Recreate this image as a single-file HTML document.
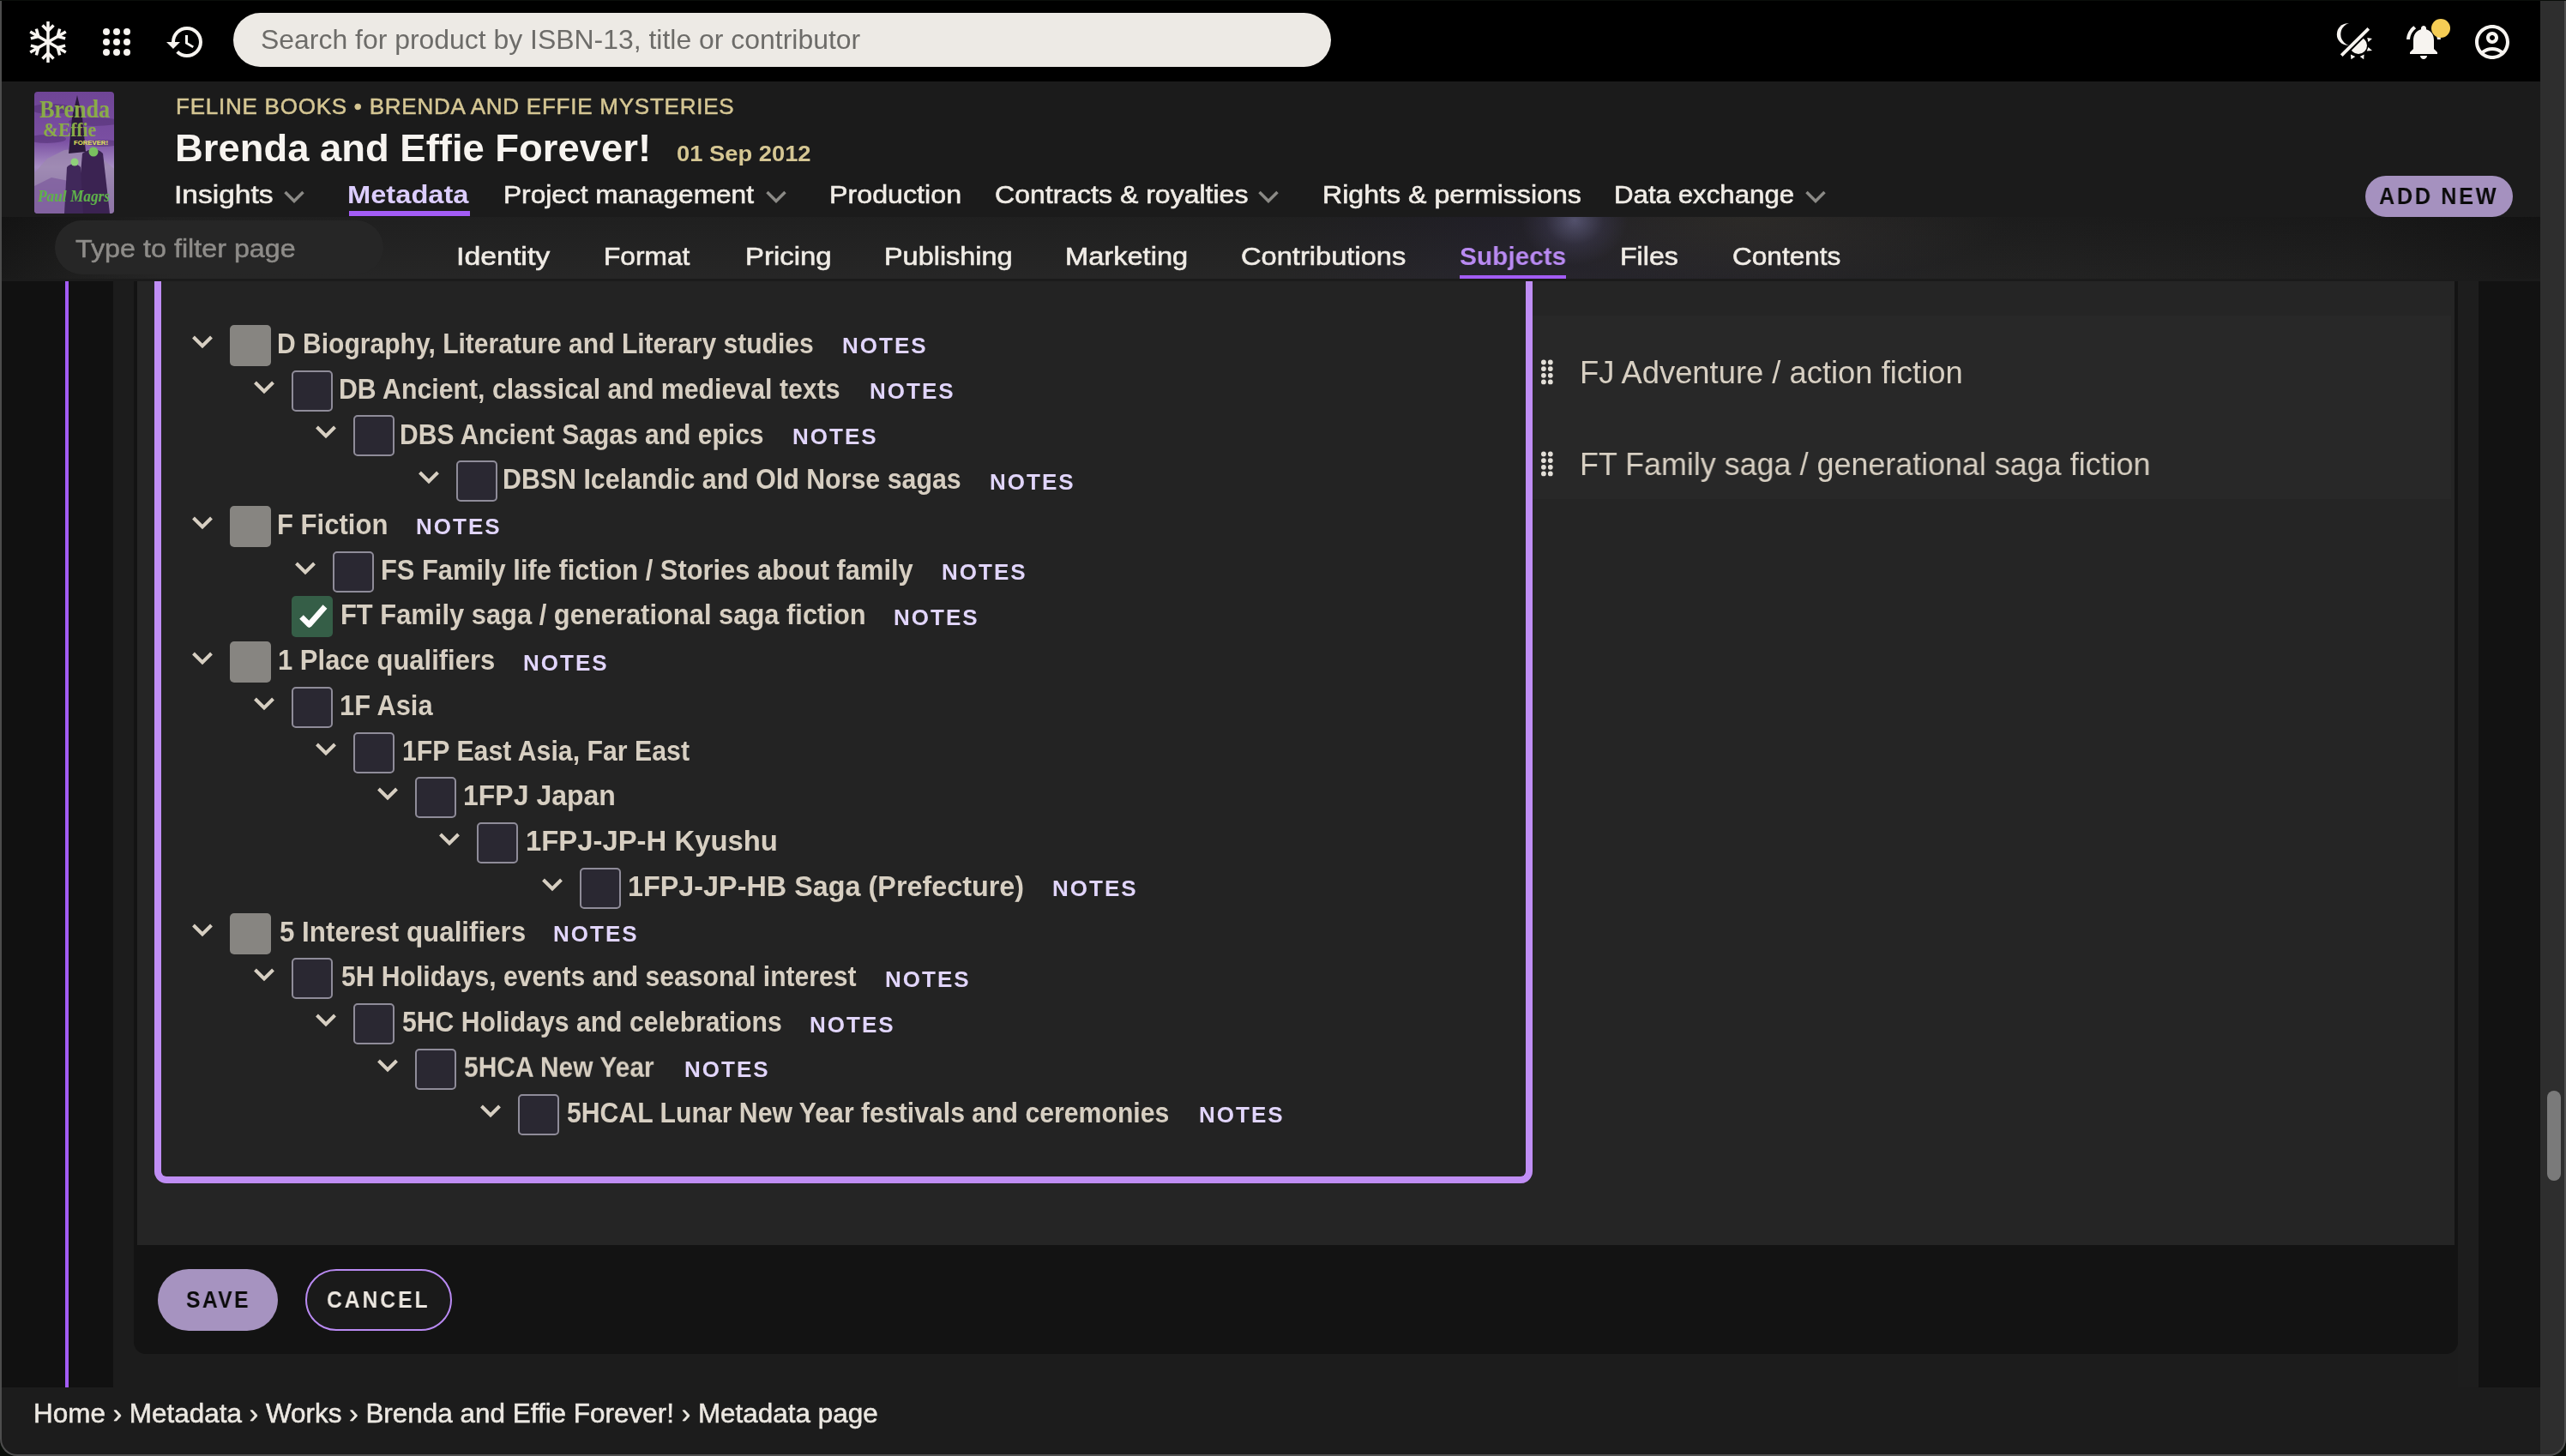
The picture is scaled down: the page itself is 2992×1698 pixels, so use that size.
<!DOCTYPE html>
<html><head><meta charset="utf-8">
<style>
html,body{margin:0;padding:0;width:2992px;height:1698px;overflow:hidden;background:#1c1c1c;}
body{position:relative;font-family:"Liberation Sans",sans-serif;}
.a{position:absolute;}
.t{position:absolute;white-space:pre;line-height:1;font-family:"Liberation Sans",sans-serif;will-change:transform;}
.cbg{position:absolute;width:48px;height:48px;border-radius:5px;background:#878581;}
.cbd{position:absolute;width:44px;height:44px;border-radius:5px;background:#2a2832;border:2px solid #8f8c99;}
.cbc{position:absolute;width:48px;height:48px;border-radius:5px;background:#355e47;}
.cbc svg{position:absolute;left:0;top:0;}
.chev{position:absolute;}
</style></head><body>
<!-- top bar -->
<div class="a" style="left:0;top:0;width:2992px;height:95px;background:#000;"></div>
<div class="a" style="left:0;top:0;width:2992px;height:1px;background:#3d3070;"></div>
<!-- header -->
<div class="a" style="left:0;top:95px;width:2962px;height:158px;background:#1b1b1b;"></div>
<!-- subnav -->
<div class="a" style="left:0;top:253px;width:2962px;height:72px;background:linear-gradient(180deg,rgba(0,0,0,0.08) 0%,rgba(255,250,240,0.02) 100%),radial-gradient(ellipse 62px 52px at 1836px 4px,rgba(98,96,130,0.85),rgba(70,66,100,0.35) 55%,rgba(0,0,0,0) 100%),radial-gradient(ellipse 300px 78px at 2040px 0px,rgba(48,46,43,0.95),rgba(0,0,0,0) 100%),linear-gradient(90deg,#151515 0,#222 200px,#222 1500px,#23212a 1760px,#1f1f1f 2300px,#1b1b1b 2750px,#141414 2962px);"></div>
<div class="a" style="left:0;top:325px;width:2962px;height:3px;background:#1b1b1b;"></div>
<!-- content columns -->
<div class="a" style="left:0;top:328px;width:132px;height:1290px;background:#111;"></div>
<div class="a" style="left:76px;top:328px;width:4px;height:1290px;background:#a35cf5;"></div>
<div class="a" style="left:132px;top:328px;width:24px;height:1290px;background:#1c1c1c;"></div>
<div class="a" style="left:2866px;top:328px;width:24px;height:1290px;background:#1d1d1d;"></div>
<div class="a" style="left:2890px;top:328px;width:72px;height:1290px;background:#121212;"></div>
<!-- container -->
<div class="a" style="left:156px;top:200px;width:2710px;height:1379px;background:#131313;border-radius:0 0 14px 14px;"></div>
<div class="a" style="left:160px;top:200px;width:2702px;height:1252px;background:#252525;"></div>
<div class="a" style="left:1787px;top:368px;width:1071px;height:214px;background:#282828;"></div>
<!-- purple box -->
<div class="a" style="left:180px;top:200px;width:1591px;height:1171.5px;border:8px solid #c08ef5;border-top:0;border-radius:0 0 14px 14px;background:#232323;"></div>
<!-- SHAPES -->
<div class="cbg" style="left:268px;top:378.9px"></div>
<svg class="chev" style="left:224px;top:390.9px" width="24" height="18" viewBox="0 0 24 18"><polyline points="1.5,2 12,12.5 22.5,2" fill="none" stroke="#d7cfc2" stroke-width="4"/></svg>
<div class="cbd" style="left:340px;top:431.6px"></div>
<svg class="chev" style="left:296px;top:443.6px" width="24" height="18" viewBox="0 0 24 18"><polyline points="1.5,2 12,12.5 22.5,2" fill="none" stroke="#d7cfc2" stroke-width="4"/></svg>
<div class="cbd" style="left:412px;top:484.4px"></div>
<svg class="chev" style="left:368px;top:496.4px" width="24" height="18" viewBox="0 0 24 18"><polyline points="1.5,2 12,12.5 22.5,2" fill="none" stroke="#d7cfc2" stroke-width="4"/></svg>
<div class="cbd" style="left:532px;top:537.1px"></div>
<svg class="chev" style="left:488px;top:549.1px" width="24" height="18" viewBox="0 0 24 18"><polyline points="1.5,2 12,12.5 22.5,2" fill="none" stroke="#d7cfc2" stroke-width="4"/></svg>
<div class="cbg" style="left:268px;top:589.9px"></div>
<svg class="chev" style="left:224px;top:601.9px" width="24" height="18" viewBox="0 0 24 18"><polyline points="1.5,2 12,12.5 22.5,2" fill="none" stroke="#d7cfc2" stroke-width="4"/></svg>
<div class="cbd" style="left:388px;top:642.6px"></div>
<svg class="chev" style="left:344px;top:654.6px" width="24" height="18" viewBox="0 0 24 18"><polyline points="1.5,2 12,12.5 22.5,2" fill="none" stroke="#d7cfc2" stroke-width="4"/></svg>
<div class="cbc" style="left:340px;top:695.3px"><svg width="48" height="48" viewBox="0 0 48 48"><polyline points="11.5,24.5 20.5,33.5 39,12.5" fill="none" stroke="#fff" stroke-width="6.5" stroke-linejoin="round"/></svg></div>
<div class="cbg" style="left:268px;top:748.1px"></div>
<svg class="chev" style="left:224px;top:760.1px" width="24" height="18" viewBox="0 0 24 18"><polyline points="1.5,2 12,12.5 22.5,2" fill="none" stroke="#d7cfc2" stroke-width="4"/></svg>
<div class="cbd" style="left:340px;top:800.8px"></div>
<svg class="chev" style="left:296px;top:812.8px" width="24" height="18" viewBox="0 0 24 18"><polyline points="1.5,2 12,12.5 22.5,2" fill="none" stroke="#d7cfc2" stroke-width="4"/></svg>
<div class="cbd" style="left:412px;top:853.6px"></div>
<svg class="chev" style="left:368px;top:865.6px" width="24" height="18" viewBox="0 0 24 18"><polyline points="1.5,2 12,12.5 22.5,2" fill="none" stroke="#d7cfc2" stroke-width="4"/></svg>
<div class="cbd" style="left:484px;top:906.3px"></div>
<svg class="chev" style="left:440px;top:918.3px" width="24" height="18" viewBox="0 0 24 18"><polyline points="1.5,2 12,12.5 22.5,2" fill="none" stroke="#d7cfc2" stroke-width="4"/></svg>
<div class="cbd" style="left:556px;top:959.0px"></div>
<svg class="chev" style="left:512px;top:971.0px" width="24" height="18" viewBox="0 0 24 18"><polyline points="1.5,2 12,12.5 22.5,2" fill="none" stroke="#d7cfc2" stroke-width="4"/></svg>
<div class="cbd" style="left:676px;top:1011.8px"></div>
<svg class="chev" style="left:632px;top:1023.8px" width="24" height="18" viewBox="0 0 24 18"><polyline points="1.5,2 12,12.5 22.5,2" fill="none" stroke="#d7cfc2" stroke-width="4"/></svg>
<div class="cbg" style="left:268px;top:1064.5px"></div>
<svg class="chev" style="left:224px;top:1076.5px" width="24" height="18" viewBox="0 0 24 18"><polyline points="1.5,2 12,12.5 22.5,2" fill="none" stroke="#d7cfc2" stroke-width="4"/></svg>
<div class="cbd" style="left:340px;top:1117.3px"></div>
<svg class="chev" style="left:296px;top:1129.3px" width="24" height="18" viewBox="0 0 24 18"><polyline points="1.5,2 12,12.5 22.5,2" fill="none" stroke="#d7cfc2" stroke-width="4"/></svg>
<div class="cbd" style="left:412px;top:1170.0px"></div>
<svg class="chev" style="left:368px;top:1182.0px" width="24" height="18" viewBox="0 0 24 18"><polyline points="1.5,2 12,12.5 22.5,2" fill="none" stroke="#d7cfc2" stroke-width="4"/></svg>
<div class="cbd" style="left:484px;top:1222.7px"></div>
<svg class="chev" style="left:440px;top:1234.7px" width="24" height="18" viewBox="0 0 24 18"><polyline points="1.5,2 12,12.5 22.5,2" fill="none" stroke="#d7cfc2" stroke-width="4"/></svg>
<div class="cbd" style="left:604px;top:1275.5px"></div>
<svg class="chev" style="left:560px;top:1287.5px" width="24" height="18" viewBox="0 0 24 18"><polyline points="1.5,2 12,12.5 22.5,2" fill="none" stroke="#d7cfc2" stroke-width="4"/></svg>
<!-- drag handles -->
<svg class="a" style="left:1795px;top:418px" width="20" height="32" viewBox="0 0 20 32"><g fill="#e3dfd8"><circle cx="4.9" cy="4.5" r="2.9"/><circle cx="12.8" cy="4.5" r="2.9"/><circle cx="4.9" cy="12.1" r="2.9"/><circle cx="12.8" cy="12.1" r="2.9"/><circle cx="4.9" cy="19.8" r="2.9"/><circle cx="12.8" cy="19.8" r="2.9"/><circle cx="4.9" cy="27.4" r="2.9"/><circle cx="12.8" cy="27.4" r="2.9"/></g></svg>
<svg class="a" style="left:1795px;top:525px" width="20" height="32" viewBox="0 0 20 32"><g fill="#e3dfd8"><circle cx="4.9" cy="4.5" r="2.9"/><circle cx="12.8" cy="4.5" r="2.9"/><circle cx="4.9" cy="12.1" r="2.9"/><circle cx="12.8" cy="12.1" r="2.9"/><circle cx="4.9" cy="19.8" r="2.9"/><circle cx="12.8" cy="19.8" r="2.9"/><circle cx="4.9" cy="27.4" r="2.9"/><circle cx="12.8" cy="27.4" r="2.9"/></g></svg>
<!-- sticky header/subnav on top of container -->
<div class="a" style="left:0;top:95px;width:2962px;height:158px;background:#1b1b1b;"></div>
<div class="a" style="left:0;top:253px;width:2962px;height:72px;background:linear-gradient(180deg,rgba(0,0,0,0.08) 0%,rgba(255,250,240,0.02) 100%),radial-gradient(ellipse 62px 52px at 1836px 4px,rgba(98,96,130,0.85),rgba(70,66,100,0.35) 55%,rgba(0,0,0,0) 100%),radial-gradient(ellipse 300px 78px at 2040px 0px,rgba(48,46,43,0.95),rgba(0,0,0,0) 100%),linear-gradient(90deg,#151515 0,#222 200px,#222 1500px,#23212a 1760px,#1f1f1f 2300px,#1b1b1b 2750px,#141414 2962px);"></div>
<div class="a" style="left:0;top:325px;width:2962px;height:3px;background:#1b1b1b;"></div>
<!-- filter input -->
<div class="a" style="left:64px;top:257px;width:383px;height:63px;border-radius:32px;background:#262626;"></div>
<!-- search -->
<div class="a" style="left:272px;top:15px;width:1280px;height:63px;border-radius:32px;background:#edeae5;"></div>
<!-- underlines -->
<div class="a" style="left:407px;top:246px;width:141px;height:6px;background:#a35cf5;"></div>
<div class="a" style="left:1702px;top:321px;width:124px;height:4px;background:#a35cf5;"></div>
<!-- nav chevrons -->
<svg class="a" style="left:331px;top:222px" width="24" height="16" viewBox="0 0 24 16"><polyline points="1.5,2 12,12.5 22.5,2" fill="none" stroke="#8b8a86" stroke-width="3.5"/></svg>
<svg class="a" style="left:893px;top:222px" width="24" height="16" viewBox="0 0 24 16"><polyline points="1.5,2 12,12.5 22.5,2" fill="none" stroke="#8b8a86" stroke-width="3.5"/></svg>
<svg class="a" style="left:1467px;top:222px" width="24" height="16" viewBox="0 0 24 16"><polyline points="1.5,2 12,12.5 22.5,2" fill="none" stroke="#8b8a86" stroke-width="3.5"/></svg>
<svg class="a" style="left:2105px;top:222px" width="24" height="16" viewBox="0 0 24 16"><polyline points="1.5,2 12,12.5 22.5,2" fill="none" stroke="#8b8a86" stroke-width="3.5"/></svg>
<!-- ADD NEW -->
<div class="a" style="left:2758px;top:205px;width:172px;height:48px;border-radius:24px;background:#a591bf;"></div>
<!-- book cover -->
<svg class="a" style="left:40px;top:107px" width="93" height="142" viewBox="0 0 93 142">
<defs><linearGradient id="bg" x1="0" y1="0" x2="0" y2="1"><stop offset="0" stop-color="#6f4596"/><stop offset="0.4" stop-color="#7a4fa2"/><stop offset="0.62" stop-color="#a88fc4"/><stop offset="0.8" stop-color="#8060a8"/><stop offset="1" stop-color="#6a3a95"/></linearGradient>
<clipPath id="cr"><rect width="93" height="142" rx="4"/></clipPath></defs>
<g clip-path="url(#cr)">
<rect width="93" height="142" fill="url(#bg)"/>
<g fill="#4a2a6a" opacity="0.45"><ellipse cx="20" cy="20" rx="25" ry="6"/><ellipse cx="70" cy="35" rx="30" ry="5"/><ellipse cx="15" cy="55" rx="22" ry="5"/><ellipse cx="80" cy="60" rx="20" ry="4"/></g>
<path d="M0 95 L15 78 L35 68 L55 66 L75 74 L93 90 L93 142 L0 142Z" fill="#9c8aae" opacity="0.75"/>
<path d="M0 110 L20 100 L40 104 L40 142 L0 142Z" fill="#7c5a9c" opacity="0.7"/>
<path d="M50 4 L56 30 L60 70 L40 72 L44 30Z" fill="#2c1a3c"/>
<path d="M56 72 Q70 62 80 72 L88 142 L50 142Z" fill="#3b2352"/>
<path d="M38 88 Q46 80 54 88 L57 142 L35 142Z" fill="#40285a"/>
<circle cx="47" cy="82" r="4.5" fill="#8fd07a"/>
<circle cx="69" cy="70" r="5.5" fill="#79c05f"/>
<text x="6" y="30" font-family="Liberation Serif" font-size="30" font-weight="700" fill="#8aab48" textLength="82" lengthAdjust="spacingAndGlyphs">Brenda</text>
<text x="10" y="52" font-family="Liberation Serif" font-size="24" font-weight="700" fill="#8aab48" textLength="62" lengthAdjust="spacingAndGlyphs">&amp;Effie</text>
<text x="46" y="62" font-family="Liberation Sans" font-size="7.5" font-weight="700" fill="#e2e35a" textLength="40" lengthAdjust="spacingAndGlyphs">FOREVER!</text>
<text x="4" y="128" font-family="Liberation Serif" font-size="18" font-style="italic" font-weight="700" fill="#5fb04a" textLength="84" lengthAdjust="spacingAndGlyphs">Paul Magrs</text>
</g></svg>
<!-- top icons -->
<svg class="a" style="left:32px;top:25px" width="48" height="48" viewBox="-24 -24 48 48"><g stroke="#f7f4f0" stroke-width="3.5" fill="none">
<g id="arm"><line x1="0" y1="0" x2="0" y2="-24"/><polyline points="-6.5,-19.5 0,-13 6.5,-19.5"/></g>
<use href="#arm" transform="rotate(60)"/><use href="#arm" transform="rotate(120)"/><use href="#arm" transform="rotate(180)"/><use href="#arm" transform="rotate(240)"/><use href="#arm" transform="rotate(300)"/></g></svg>
<svg class="a" style="left:112px;top:25px" width="48" height="48" viewBox="0 0 48 48"><g fill="#f7f4f0">
<circle cx="12" cy="12" r="4"/><circle cx="24" cy="12" r="4"/><circle cx="36" cy="12" r="4"/>
<circle cx="12" cy="24" r="4"/><circle cx="24" cy="24" r="4"/><circle cx="36" cy="24" r="4"/>
<circle cx="12" cy="36" r="4"/><circle cx="24" cy="36" r="4"/><circle cx="36" cy="36" r="4"/></g></svg>
<svg class="a" style="left:192px;top:25px" width="48" height="48" viewBox="0 0 24 24"><path fill="#f7f4f0" d="M13 3a9 9 0 0 0-9 9H1l3.89 3.89.07.14L9 12H6c0-3.87 3.13-7 7-7s7 3.13 7 7-3.13 7-7 7c-1.93 0-3.68-.79-4.94-2.06l-1.42 1.42A8.954 8.954 0 0 0 13 21a9 9 0 0 0 0-18zm-1 5v5l4.28 2.54.72-1.21-3.5-2.08V8H12z"/></svg>
<!-- theme icon -->
<svg class="a" style="left:2720px;top:24px" width="50" height="50" viewBox="0 0 50 50">
<defs><clipPath id="lr"><path d="M56.6 0 L50 0 L50 50 L6.6 50Z"/></clipPath>
<mask id="moon"><rect width="50" height="50" fill="#fff"/><circle cx="22.7" cy="16" r="13.4" fill="#000"/></mask></defs>
<circle cx="17.5" cy="16" r="12.7" fill="#f7f4f0" mask="url(#moon)"/>
<line x1="10.2" y1="40.7" x2="41.8" y2="9.4" stroke="#f7f4f0" stroke-width="3.8"/>
<circle cx="30" cy="29" r="10" fill="#f7f4f0" clip-path="url(#lr)"/>
<path fill="#f7f4f0" d="M40.2 20.1 L46 21 L41.5 25Z M41.5 30.9 L46 35 L39.7 35.4Z M20.9 39.4 L26.3 42.1 L21.4 45.2Z M36.6 39.4 L31.7 42.1 L36.2 45.2Z"/>
</svg>
<svg class="a" style="left:2802px;top:25px" width="48" height="48" viewBox="0 0 24 24"><path fill="#f7f4f0" d="M7.58 4.08L6.15 2.65C3.75 4.48 2.17 7.3 2.03 10.5h2c.15-2.65 1.51-4.97 3.55-6.42zm12.39 6.42h2c-.15-3.2-1.73-6.02-4.12-7.85l-1.42 1.43c2.02 1.45 3.39 3.77 3.54 6.42zM18 11c0-3.07-1.64-5.64-4.5-6.32V4c0-.83-.67-1.5-1.5-1.5s-1.5.67-1.5 1.5v.68C7.63 5.36 6 7.92 6 11v5l-2 2v1h16v-1l-2-2v-5zm-6 11c.14 0 .27-.01.4-.04.65-.14 1.180-.58 1.44-1.18.1-.24.15-.5.15-.78h-4c.01 1.1.9 2 2.01 2z"/></svg>
<div class="a" style="left:2835px;top:21.5px;width:22.4px;height:22.4px;border-radius:50%;background:#f5cd55;"></div>
<svg class="a" style="left:2882px;top:25px" width="48" height="48" viewBox="0 0 24 24"><path fill="#f7f4f0" d="M12 2C6.48 2 2 6.48 2 12s4.48 10 10 10 10-4.48 10-10S17.52 2 12 2zM7.35 18.5C8.66 17.56 10.26 17 12 17s3.34.56 4.65 1.5c-1.31.94-2.91 1.5-4.650 1.5s-3.34-.56-4.65-1.5zm10.79-1.38a9.947 9.947 0 0 0-12.28 0A7.957 7.957 0 0 1 4 12c0-4.42 3.58-8 8-8s8 3.58 8 8c0 1.95-.7 3.73-1.86 5.12zM12 6c-1.93 0-3.5 1.57-3.5 3.5S10.070 13 12 13s3.5-1.57 3.5-3.5S13.93 6 12 6zm0 5c-.83 0-1.5-.67-1.5-1.5S11.17 8 12 8s1.5.67 1.5 1.5S12.83 11 12 11z"/></svg>
<!-- action buttons -->
<div class="a" style="left:184px;top:1480px;width:140px;height:72px;border-radius:36px;background:#a693c0;"></div>
<div class="a" style="left:356px;top:1480px;width:167px;height:68px;border-radius:36px;border:2px solid #b98af2;background:#1a1a1a;"></div>
<!-- breadcrumb bar -->
<div class="a" style="left:0;top:1618px;width:2962px;height:80px;background:#1c1c1c;"></div>
<!-- scrollbar -->
<div class="a" style="left:2962px;top:1px;width:30px;height:1697px;background:#2e2e2e;"></div>
<div class="a" style="left:2970px;top:1272px;width:16px;height:105px;border-radius:8px;background:#7a7a7a;"></div>
<!-- window edges -->
<div class="a" style="left:0;top:1px;width:2992px;height:1697px;box-sizing:border-box;border:2px solid #4d4d4d;border-top:0;border-radius:0 0 20px 20px;box-shadow:0 0 0 40px #0a0e0a;"></div>
<div class="t" style="left:303.6px;top:31.7px;font-size:30px;color:#6d6c69;transform:scale(1.0642,1.05);transform-origin:0 25.4px;">Search for product by ISBN-13, title or contributor</div>
<div class="t" style="left:204.6px;top:110.7px;font-size:26px;color:#d5c693;letter-spacing:0.76px;-webkit-text-stroke:0.5px currentColor;">FELINE BOOKS • BRENDA AND EFFIE MYSTERIES</div>
<div class="t" style="left:204.0px;top:149.9px;font-size:45px;color:#f7f4f0;font-weight:700;transform:scale(1.0089,1.0);transform-origin:0 38.1px;">Brenda and Effie Forever!</div>
<div class="t" style="left:788.9px;top:166.0px;font-size:26px;color:#d5c693;font-weight:700;transform:scale(1.0513,1.0);transform-origin:0 22.0px;">01 Sep 2012</div>
<div class="t" style="left:203.4px;top:212.4px;font-size:30px;color:#f0ece6;transform:scale(1.1177,1.0);transform-origin:0 25.4px;-webkit-text-stroke:0.6px currentColor;">Insights</div>
<div class="t" style="left:405.1px;top:212.4px;font-size:30px;color:#dccdff;font-weight:700;transform:scale(1.0884,1.0);transform-origin:0 25.4px;">Metadata</div>
<div class="t" style="left:586.9px;top:212.4px;font-size:30px;color:#f0ece6;transform:scale(1.0549,1.0);transform-origin:0 25.4px;-webkit-text-stroke:0.6px currentColor;">Project management</div>
<div class="t" style="left:967.3px;top:212.4px;font-size:30px;color:#f0ece6;transform:scale(1.0742,1.0);transform-origin:0 25.4px;-webkit-text-stroke:0.6px currentColor;">Production</div>
<div class="t" style="left:1160.4px;top:212.4px;font-size:30px;color:#f0ece6;transform:scale(1.0674,1.0);transform-origin:0 25.4px;-webkit-text-stroke:0.6px currentColor;">Contracts &amp; royalties</div>
<div class="t" style="left:1541.5px;top:212.4px;font-size:30px;color:#f0ece6;transform:scale(1.0715,1.0);transform-origin:0 25.4px;-webkit-text-stroke:0.6px currentColor;">Rights &amp; permissions</div>
<div class="t" style="left:1882.4px;top:212.4px;font-size:30px;color:#f0ece6;transform:scale(1.0415,1.0);transform-origin:0 25.4px;-webkit-text-stroke:0.6px currentColor;">Data exchange</div>
<div class="t" style="left:2774.0px;top:214.5px;font-size:28px;color:#0b0b0b;font-weight:700;letter-spacing:2.98px;transform:scale(0.9000,1.0);transform-origin:0 23.7px;">ADD NEW</div>
<div class="t" style="left:88.0px;top:274.6px;font-size:30px;color:#8e8c89;transform:scale(1.0766,1.0);transform-origin:0 25.4px;-webkit-text-stroke:0.5px currentColor;">Type to filter page</div>
<div class="t" style="left:531.7px;top:284.1px;font-size:30px;color:#f0ece6;transform:scale(1.1296,1.0);transform-origin:0 25.4px;-webkit-text-stroke:0.6px currentColor;">Identity</div>
<div class="t" style="left:703.8px;top:284.1px;font-size:30px;color:#f0ece6;transform:scale(1.0558,1.0);transform-origin:0 25.4px;-webkit-text-stroke:0.6px currentColor;">Format</div>
<div class="t" style="left:868.5px;top:284.1px;font-size:30px;color:#f0ece6;transform:scale(1.0964,1.0);transform-origin:0 25.4px;-webkit-text-stroke:0.6px currentColor;">Pricing</div>
<div class="t" style="left:1030.6px;top:284.1px;font-size:30px;color:#f0ece6;transform:scale(1.0806,1.0);transform-origin:0 25.4px;-webkit-text-stroke:0.6px currentColor;">Publishing</div>
<div class="t" style="left:1242.1px;top:284.1px;font-size:30px;color:#f0ece6;transform:scale(1.0872,1.0);transform-origin:0 25.4px;-webkit-text-stroke:0.6px currentColor;">Marketing</div>
<div class="t" style="left:1446.8px;top:284.1px;font-size:30px;color:#f0ece6;transform:scale(1.0878,1.0);transform-origin:0 25.4px;-webkit-text-stroke:0.6px currentColor;">Contributions</div>
<div class="t" style="left:1889.3px;top:284.1px;font-size:30px;color:#f0ece6;transform:scale(1.0706,1.0);transform-origin:0 25.4px;-webkit-text-stroke:0.6px currentColor;">Files</div>
<div class="t" style="left:2019.6px;top:284.1px;font-size:30px;color:#f0ece6;transform:scale(1.0527,1.0);transform-origin:0 25.4px;-webkit-text-stroke:0.6px currentColor;">Contents</div>
<div class="t" style="left:1702.4px;top:284.1px;font-size:30px;color:#b98af2;font-weight:700;transform:scale(0.9939,1.0);transform-origin:0 25.4px;">Subjects</div>
<div class="t" style="left:323.0px;top:387.0px;font-size:30px;color:#d7cfc2;font-weight:700;transform:scale(1.0018,1.08);transform-origin:0 25.4px;">D Biography, Literature and Literary studies</div>
<div class="t" style="left:982.0px;top:390.4px;font-size:26px;color:#e1d5fb;font-weight:700;letter-spacing:2.02px;">NOTES</div>
<div class="t" style="left:395.0px;top:439.7px;font-size:30px;color:#d7cfc2;font-weight:700;transform:scale(1.0094,1.08);transform-origin:0 25.4px;">DB Ancient, classical and medieval texts</div>
<div class="t" style="left:1014.0px;top:443.1px;font-size:26px;color:#e1d5fb;font-weight:700;letter-spacing:2.02px;">NOTES</div>
<div class="t" style="left:466.0px;top:492.5px;font-size:30px;color:#d7cfc2;font-weight:700;transform:scale(1.0013,1.08);transform-origin:0 25.4px;">DBS Ancient Sagas and epics</div>
<div class="t" style="left:924.0px;top:495.9px;font-size:26px;color:#e1d5fb;font-weight:700;letter-spacing:2.02px;">NOTES</div>
<div class="t" style="left:586.0px;top:545.2px;font-size:30px;color:#d7cfc2;font-weight:700;transform:scale(1.0118,1.08);transform-origin:0 25.4px;">DBSN Icelandic and Old Norse sagas</div>
<div class="t" style="left:1153.6px;top:548.6px;font-size:26px;color:#e1d5fb;font-weight:700;letter-spacing:2.02px;">NOTES</div>
<div class="t" style="left:322.9px;top:598.0px;font-size:30px;color:#d7cfc2;font-weight:700;transform:scale(1.0357,1.08);transform-origin:0 25.4px;">F Fiction</div>
<div class="t" style="left:485.0px;top:601.3px;font-size:26px;color:#e1d5fb;font-weight:700;letter-spacing:2.02px;">NOTES</div>
<div class="t" style="left:443.5px;top:650.7px;font-size:30px;color:#d7cfc2;font-weight:700;transform:scale(1.0287,1.08);transform-origin:0 25.4px;">FS Family life fiction / Stories about family</div>
<div class="t" style="left:1098.0px;top:654.1px;font-size:26px;color:#e1d5fb;font-weight:700;letter-spacing:2.02px;">NOTES</div>
<div class="t" style="left:396.7px;top:703.4px;font-size:30px;color:#d7cfc2;font-weight:700;transform:scale(1.0294,1.08);transform-origin:0 25.4px;">FT Family saga / generational saga fiction</div>
<div class="t" style="left:1042.0px;top:706.8px;font-size:26px;color:#e1d5fb;font-weight:700;letter-spacing:2.02px;">NOTES</div>
<div class="t" style="left:324.0px;top:756.2px;font-size:30px;color:#d7cfc2;font-weight:700;transform:scale(1.0331,1.08);transform-origin:0 25.4px;">1 Place qualifiers</div>
<div class="t" style="left:609.6px;top:759.6px;font-size:26px;color:#e1d5fb;font-weight:700;letter-spacing:2.02px;">NOTES</div>
<div class="t" style="left:396.0px;top:808.9px;font-size:30px;color:#d7cfc2;font-weight:700;transform:scale(1.0280,1.08);transform-origin:0 25.4px;">1F Asia</div>
<div class="t" style="left:469.0px;top:861.7px;font-size:30px;color:#d7cfc2;font-weight:700;transform:scale(1.0096,1.08);transform-origin:0 25.4px;">1FP East Asia, Far East</div>
<div class="t" style="left:540.3px;top:914.4px;font-size:30px;color:#d7cfc2;font-weight:700;transform:scale(1.0668,1.08);transform-origin:0 25.4px;">1FPJ Japan</div>
<div class="t" style="left:612.9px;top:967.1px;font-size:30px;color:#d7cfc2;font-weight:700;transform:scale(1.0949,1.08);transform-origin:0 25.4px;">1FPJ-JP-H Kyushu</div>
<div class="t" style="left:731.9px;top:1019.9px;font-size:30px;color:#d7cfc2;font-weight:700;transform:scale(1.0786,1.08);transform-origin:0 25.4px;">1FPJ-JP-HB Saga (Prefecture)</div>
<div class="t" style="left:1226.5px;top:1023.3px;font-size:26px;color:#e1d5fb;font-weight:700;letter-spacing:2.02px;">NOTES</div>
<div class="t" style="left:325.5px;top:1072.6px;font-size:30px;color:#d7cfc2;font-weight:700;transform:scale(1.0440,1.08);transform-origin:0 25.4px;">5 Interest qualifiers</div>
<div class="t" style="left:645.0px;top:1076.0px;font-size:26px;color:#e1d5fb;font-weight:700;letter-spacing:2.02px;">NOTES</div>
<div class="t" style="left:397.5px;top:1125.4px;font-size:30px;color:#d7cfc2;font-weight:700;transform:scale(1.0032,1.08);transform-origin:0 25.4px;">5H Holidays, events and seasonal interest</div>
<div class="t" style="left:1032.0px;top:1128.7px;font-size:26px;color:#e1d5fb;font-weight:700;letter-spacing:2.02px;">NOTES</div>
<div class="t" style="left:469.0px;top:1178.1px;font-size:30px;color:#d7cfc2;font-weight:700;transform:scale(1.0058,1.08);transform-origin:0 25.4px;">5HC Holidays and celebrations</div>
<div class="t" style="left:943.7px;top:1181.5px;font-size:26px;color:#e1d5fb;font-weight:700;letter-spacing:2.02px;">NOTES</div>
<div class="t" style="left:541.0px;top:1230.8px;font-size:30px;color:#d7cfc2;font-weight:700;transform:scale(0.9993,1.08);transform-origin:0 25.4px;">5HCA New Year</div>
<div class="t" style="left:798.0px;top:1234.2px;font-size:26px;color:#e1d5fb;font-weight:700;letter-spacing:2.02px;">NOTES</div>
<div class="t" style="left:661.0px;top:1283.6px;font-size:30px;color:#d7cfc2;font-weight:700;transform:scale(1.0069,1.08);transform-origin:0 25.4px;">5HCAL Lunar New Year festivals and ceremonies</div>
<div class="t" style="left:1397.6px;top:1287.0px;font-size:26px;color:#e1d5fb;font-weight:700;letter-spacing:2.02px;">NOTES</div>
<div class="t" style="left:1841.5px;top:416.5px;font-size:36px;color:#d7cfc2;transform:scale(1.0100,1.0);transform-origin:0 30.5px;">FJ Adventure / action fiction</div>
<div class="t" style="left:1841.5px;top:523.5px;font-size:36px;color:#d7cfc2;transform:scale(0.9965,1.0);transform-origin:0 30.5px;">FT Family saga / generational saga fiction</div>
<div class="t" style="left:217.0px;top:1501.8px;font-size:28px;color:#0b0b0b;font-weight:700;letter-spacing:2.77px;transform:scale(0.8800,1.0);transform-origin:0 23.7px;">SAVE</div>
<div class="t" style="left:381.1px;top:1501.8px;font-size:28px;color:#ece7e0;font-weight:700;letter-spacing:3.39px;transform:scale(0.8800,1.0);transform-origin:0 23.7px;">CANCEL</div>
<div class="t" style="left:38.6px;top:1633.5px;font-size:30px;color:#ece8e2;transform:scale(1.0483,1.06);transform-origin:0 25.4px;-webkit-text-stroke:0.5px currentColor;">Home › Metadata › Works › Brenda and Effie Forever! › Metadata page</div>
</body></html>
